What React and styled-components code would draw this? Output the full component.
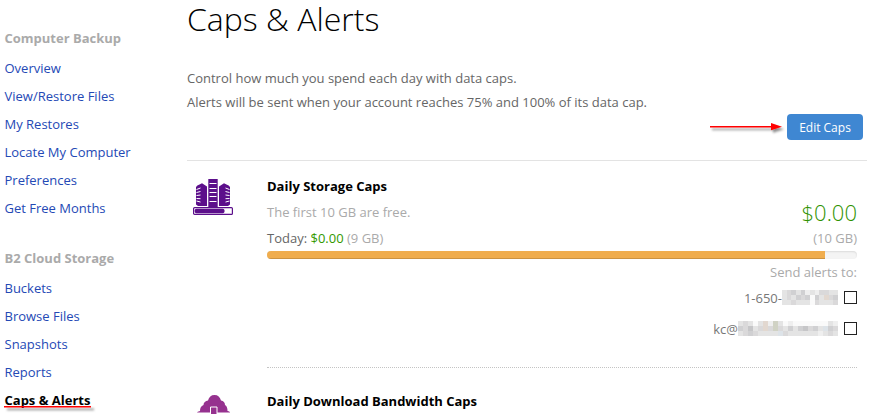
import React from 'react';
import styled, { createGlobalStyle } from 'styled-components';

const Global = createGlobalStyle`
  * { box-sizing: border-box; }
  html, body { margin: 0; padding: 0; overflow: hidden; background: #fff; }
  body { font-family: "Open Sans", "Noto Sans", sans-serif; font-size: 13px; color: #666; }
`;

const Page = styled.div`
  display: grid;
  grid-template-columns: 187px 1fr;
  width: 872px;
  height: 414px;
  overflow: hidden;
`;

const Sidebar = styled.nav`
  padding: 24px 0 0 4.5px;
`;

const NavGroup = styled.section`
  margin-bottom: 22px;
`;

const NavHeading = styled.h2`
  margin: 0 0 2px;
  font-size: 13px;
  font-weight: 700;
  line-height: 28px;
  color: #aaa;
`;

const NavLink = styled.a`
  display: block;
  position: relative;
  width: max-content;
  line-height: 28px;
  color: ${(p) => (p.$active ? '#000' : '#2449b5')};
  font-weight: ${(p) => (p.$active ? 700 : 400)};
  text-decoration: none;
`;

const Underline = styled.svg`
  position: absolute;
  left: -1.5px;
  top: 16px;
`;

const Main = styled.main`
  padding-right: 5px;
`;

const Title = styled.h1`
  margin: 0;
  height: 66px;
  font-size: 32px;
  font-weight: 300;
  line-height: 38px;
  color: #000;
`;

const Intro = styled.p`
  margin: 0;
  line-height: 24px;
  white-space: nowrap;
`;

const ActionBar = styled.div`
  display: flex;
  justify-content: flex-end;
  align-items: flex-start;
  height: 47px;
  padding-right: 4px;
  border-bottom: 1px solid #e3e3e3;
`;

const ArrowDrawing = styled.svg`
  margin: 3px 2px 0 0;
`;

const EditButton = styled.button`
  width: 76px;
  height: 26px;
  padding: 1px 0 0;
  border: 0;
  border-radius: 4px;
  background: #3f87d2;
  color: #fff;
  font: 400 12px/25px "Open Sans", sans-serif;
`;

const CapSection = styled.section`
  display: grid;
  grid-template-columns: 80px 590px;
  padding-top: ${(p) => p.$top};
`;

const IconCell = styled.div`
  padding: ${(p) => p.$pad};
  svg { display: block; }
`;

const CapTitle = styled.h3`
  margin: 0;
  height: 20px;
  font-size: 13px;
  font-weight: 700;
  line-height: 20px;
  color: #000;
`;

const CapBody = styled.div`
  height: 192px;
  border-bottom: 1px dotted #c4c4c4;
`;

const Row = styled.div`
  display: flex;
  justify-content: space-between;
  align-items: center;
  height: ${(p) => p.$height};
`;

const Muted = styled.span`
  color: #aaa;
`;

const Green = styled.span`
  color: #339900;
`;

const Price = styled.span`
  font-size: 22px;
  font-weight: 300;
  line-height: 26px;
  color: #2f9200;
`;

const Track = styled.div`
  height: 8px;
  margin-top: 2px;
  overflow: hidden;
  border-radius: 4px;
  background: #f4f4f4;
  box-shadow: inset 0 1px 2px rgba(0, 0, 0, 0.1);
`;

const Fill = styled.div`
  height: 100%;
  background: #f0ad4e;
  box-shadow: inset 0 -1px 0 rgba(0, 0, 0, 0.15);
`;

const AlertLabel = styled.div`
  height: 26px;
  line-height: 26px;
  text-align: right;
  color: #aaa;
`;

const Contact = styled.label`
  display: flex;
  justify-content: flex-end;
  align-items: center;
  height: ${(p) => p.$height};
  color: #777;
`;

const Mosaic = styled.span`
  display: grid;
  grid-template-columns: repeat(${(p) => p.$cols}, 1fr);
  grid-auto-rows: 5px;
  width: ${(p) => p.$width};
  margin-right: 6px;
`;

const Cell = styled.i`
  background: ${(p) => p.$c};
`;

const Checkbox = styled.span`
  width: 13px;
  height: 13px;
  border: 1px solid #222;
  background: #fff;
`;

const palette = {
  a: '#c6c6c8',
  b: '#d0d0d2',
  c: '#dad9da',
  d: '#e4e4e4',
  e: '#efefef',
  f: '#fafafa',
  w: '#e2d8d0',
  g: '#d0d2c4',
  u: '#dde3e8',
};

const phoneCells = ['dcbdbedeccdd', 'dcdbcbfbdwcb', 'ddcdddfcdddc'];
const mailCells = ['dcdfdwegdfefffffffde', 'bcadcwcgcdbdbacbdubc', 'dcbcdddducddddddedcd'];

const Redacted = ({ rows, width }) => (
  <Mosaic $cols={rows[0].length} $width={width} aria-hidden="true">
    {rows.flatMap((row, y) => [...row].map((c, x) => <Cell key={`${y}-${x}`} $c={palette[c]} />))}
  </Mosaic>
);

const Arrow = () => (
  <ArrowDrawing width="75" height="22" viewBox="0 0 75 22">
    <defs>
      <filter id="arrowShadow" x="-10%" y="-80%" width="120%" height="300%">
        <feDropShadow dx="2" dy="2.5" stdDeviation="1" floodColor="#000" floodOpacity="0.45" />
      </filter>
    </defs>
    <g filter="url(#arrowShadow)" fill="#f00">
      <path d="M0 9h63v1.400H0z" />
      <path d="M61 6l11 3.700L61 13.300z" />
    </g>
  </ArrowDrawing>
);

const Servers = () => (
  <svg width="42" height="38" viewBox="0 0 42 38">
    <g fill="#5c0f8b">
      <path d="M3 8Q4 6 6.500 5.500L9 4.200 14 7.500V27H5L3 25.500z" />
      <path d="M37 8Q36 6 33.500 5.500L31 4.200 26 7.500V27h9l2-1.500z" />
      <path d="M15.300 0h9.400v28h-9.400z" />
    </g>
    <path d="M16.500 4.500h7M16.500 9.500h7M16.500 13.500h7M16.500 17.500h7M16.500 22.500h7" stroke="#fff" strokeWidth="1.100" />
    <path d="M3.500 10.500l4-1.500M3.500 13.500l4-1M3.500 16.500l4-.5M3.500 19.500l4 .2M3.500 22l4 1M36.500 10.500l-4-1.500M36.500 13.500l-4-1M36.500 16.500l-4-.5M36.500 19.500l-4 .2M36.500 22l-4 1" stroke="#fff" strokeWidth="1" />
    <rect x=".6" y="28.600" width="38.800" height="6.800" rx="1" fill="#fff" stroke="#5c0f8b" strokeWidth="1.200" />
    <rect x="1.700" y="29.800" width="29.800" height="4.400" rx="1.700" fill="#5c0f8b" />
  </svg>
);

const Cloud = () => (
  <svg width="34" height="30" viewBox="0 0 34 30">
    <path d="M0 17.500q0-.8 3-1.500c0-3 1-5 3.500-6C6.500 7.500 8.500 6 11 5.500 12 2 14 0 17.500 0s5.500 2 6.500 5.500c2.500.5 4 2 4 4.500 2 1 2.500 3.500 2.500 6 2 .5 2.500 .7 2.500 1.500z" fill="#96328f" />
    <path d="M13.500 30V12h6.500v18" fill="#96328f" stroke="#fff" />
  </svg>
);

const computerLinks = [
  'Overview',
  'View/Restore Files',
  'My Restores',
  'Locate My Computer',
  'Preferences',
  'Get Free Months',
];
const storageLinks = ['Buckets', 'Browse Files', 'Snapshots', 'Reports'];

export default function App() {
  return (
    <>
      <Global />
      <Page>
        <Sidebar>
          <NavGroup>
            <NavHeading>Computer Backup</NavHeading>
            {computerLinks.map((t) => <NavLink key={t}>{t}</NavLink>)}
          </NavGroup>
          <NavGroup>
            <NavHeading>B2 Cloud Storage</NavHeading>
            {storageLinks.map((t) => <NavLink key={t}>{t}</NavLink>)}
            <NavLink $active>
              Caps &amp; Alerts
              <Underline width="96" height="12" viewBox="0 0 96 12">
                <defs>
                  <filter id="lineShadow" x="-5%" y="-400%" width="112%" height="1000%">
                    <feDropShadow dx="3" dy="2.500" stdDeviation="1.200" floodColor="#000" floodOpacity="0.5" />
                  </filter>
                </defs>
                <rect x="1" y="4" width="87" height="1.500" fill="#f00" filter="url(#lineShadow)" />
              </Underline>
            </NavLink>
          </NavGroup>
        </Sidebar>
        <Main>
          <Title>Caps &amp; Alerts</Title>
          <Intro>Control how much you spend each day with data caps.</Intro>
          <Intro>Alerts will be sent when your account reaches 75% and 100% of its data cap.</Intro>
          <ActionBar>
            <Arrow />
            <EditButton>Edit Caps</EditButton>
          </ActionBar>
          <CapSection $top="15px">
            <IconCell $pad="3px 0 0 6px"><Servers /></IconCell>
            <CapBody>
              <CapTitle>Daily Storage Caps</CapTitle>
              <Row $height="31px"><Muted>The first 10 GB are free.</Muted><Price>$0.00</Price></Row>
              <Row $height="22px">
                <span>Today: <Green>$0.00</Green> <Muted>(9 GB)</Muted></span>
                <Muted>(10 GB)</Muted>
              </Row>
              <Track><Fill style={{ width: '94.6%' }} /></Track>
              <AlertLabel>Send alerts to:</AlertLabel>
              <Contact $height="25px">1-650-<Redacted rows={phoneCells} width="56px" /><Checkbox /></Contact>
              <Contact $height="37px">kc@<Redacted rows={mailCells} width="100px" /><Checkbox /></Contact>
            </CapBody>
          </CapSection>
          <CapSection $top="23px">
            <IconCell $pad="4px 0 0 10px"><Cloud /></IconCell>
            <CapTitle>Daily Download Bandwidth Caps</CapTitle>
          </CapSection>
        </Main>
      </Page>
    </>
  );
}
